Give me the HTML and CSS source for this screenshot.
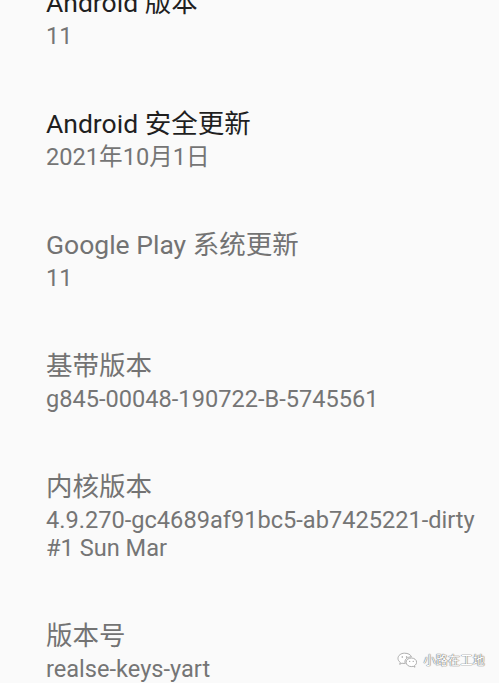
FILE: index.html
```html
<!DOCTYPE html>
<html lang="zh-CN">
<head>
<meta charset="utf-8">
<title>关于手机</title>
<link rel="stylesheet" href="styles.css">
</head>
<body>
<div class="screen">
  <ul class="list">
    <li class="item">
      <div class="title">Android 版本</div>
      <div class="summary">11</div>
    </li>
    <li class="item">
      <div class="title">Android 安全更新</div>
      <div class="summary">2021年10月1日</div>
    </li>
    <li class="item">
      <div class="title title-muted">Google Play 系统更新</div>
      <div class="summary">11</div>
    </li>
    <li class="item">
      <div class="title title-muted">基带版本</div>
      <div class="summary">g845-00048-190722-B-5745561</div>
    </li>
    <li class="item">
      <div class="title title-muted">内核版本</div>
      <div class="summary">4.9.270-gc4689af91bc5-ab7425221-dirty<br>#1 Sun Mar</div>
    </li>
    <li class="item">
      <div class="title title-muted">版本号</div>
      <div class="summary">realse-keys-yart</div>
    </li>
  </ul>
  <div class="watermark">
    <svg class="wm-icon" width="20" height="17" viewBox="0 0 20 17">
      <path d="M7.5 1.2C3.9 1.2 1 3.5 1 6.4c0 1.6.9 3 2.3 4l-.6 1.9 2.2-1.1c.8.2 1.6.3 2.5.3.3 0 .6 0 .8 0-.2-.5-.3-1-.3-1.6 0-2.8 2.7-5 6-5h.5C13.8 2.6 11 1.2 7.5 1.2z" fill="#fff" stroke="#9a9a9a" stroke-width="0.8"/>
      <path d="M14.4 6c-2.9 0-5.3 1.9-5.3 4.3s2.4 4.3 5.3 4.3c.6 0 1.2-.1 1.8-.3l1.8.9-.5-1.6c1.3-.8 2.100-2 2.1-3.3C19.6 7.9 17.3 6 14.4 6z" fill="#fff" stroke="#9a9a9a" stroke-width="0.8"/>
      <circle cx="5.3" cy="5" r="0.8" fill="#9a9a9a"/>
      <circle cx="9.6" cy="5" r="0.8" fill="#9a9a9a"/>
      <circle cx="12.7" cy="9.3" r="0.65" fill="#9a9a9a"/>
      <circle cx="16.2" cy="9.3" r="0.65" fill="#9a9a9a"/>
    </svg>
    <span class="wm-text">小路在工地</span>
  </div>
</div>
</body>
</html>
```
FILE: styles.css
```css
html, body {
  margin: 0;
  padding: 0;
  background: #fafafa;
}

.screen {
  position: relative;
  width: 499px;
  height: 683px;
  overflow: hidden;
  background: #fafafa;
  font-family: Roboto, "Noto Sans CJK SC", sans-serif;
}

.list {
  list-style: none;
  margin: -41px 0 0 0;
  padding: 0;
}

.item {
  padding: 28px 16px 29.5px 46px;
}

.title {
  font-size: 26.5px;
  line-height: 31px;
  color: #1f1f1f;
  white-space: nowrap;
}

.title-muted {
  color: #737373;
}

.summary {
  margin-top: 5px;
  font-size: 23.6px;
  line-height: 27.5px;
  color: #757575;
  white-space: nowrap;
}

.watermark {
  position: absolute;
  right: 14px;
  bottom: 14px;
  display: flex;
  align-items: center;
  gap: 6px;
}

.wm-icon {
  display: block;
}

.wm-text {
  font-size: 12px;
  line-height: 14px;
  color: #fff;
  letter-spacing: 0.3px;
  text-shadow: 0 0 1px #777, 0 0 1px #777, 0 0 1px #888;
}
```
